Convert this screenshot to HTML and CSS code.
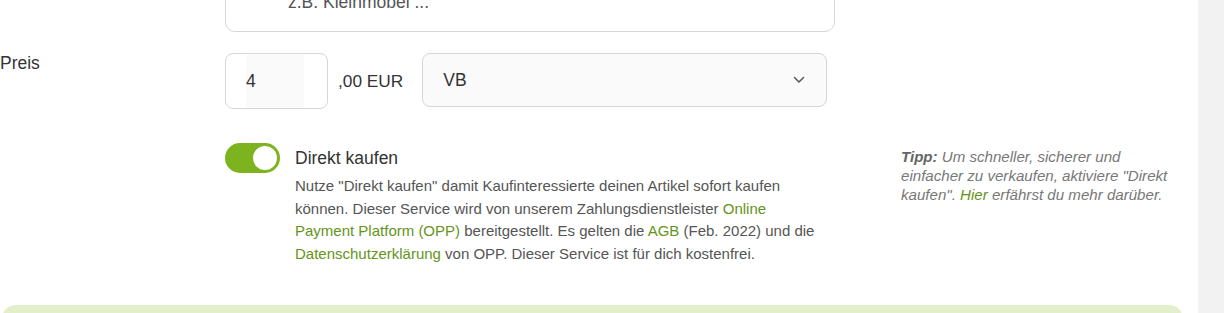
FILE: index.html
```html
<!DOCTYPE html>
<html lang="de">
<head>
    <meta charset="UTF-8">
    <meta name="viewport" content="width=device-width, initial-scale=1.0">
    <title>Anzeige aufgeben</title>
    <link rel="stylesheet" href="styles.css">
</head>
<body>
    <div class="page">
        <main class="main">
            <div class="form">
                <div class="row row-description">
                    <div class="label"></div>
                    <div class="textarea">
                        <span class="placeholder">z.B. Kleinmöbel ...</span>
                    </div>
                </div>

                <div class="row row-price">
                    <div class="label">Preis</div>
                    <div class="price-fields">
                        <div class="price-input"><span class="price-value">4</span></div>
                        <span class="currency">,00 EUR</span>
                        <div class="select">
                            <span>VB</span>
                            <svg class="chevron" width="12" height="8" viewBox="0 0 12 8">
                                <path d="M1.5 1.5 L6 6 L10.5 1.5" fill="none" stroke="#555" stroke-width="1.5" stroke-linecap="round" stroke-linejoin="round"/>
                            </svg>
                        </div>
                    </div>
                </div>

                <div class="row row-direct">
                    <div class="label"></div>
                    <div class="direct">
                        <div class="toggle on"><span class="knob"></span></div>
                        <div class="direct-text">
                            <div class="direct-title">Direkt kaufen</div>
                            <p class="direct-desc">
                                Nutze "Direkt kaufen" damit Kaufinteressierte deinen Artikel sofort kaufen
                                können. Dieser Service wird von unserem Zahlungsdienstleister
                                <a href="#">Online Payment Platform (OPP)</a> bereitgestellt. Es gelten die
                                <a href="#">AGB</a> (Feb. 2022) und die
                                <a href="#">Datenschutzerklärung</a> von OPP. Dieser Service ist für dich kostenfrei.
                            </p>
                        </div>
                    </div>
                    <p class="tip">
                        <strong>Tipp:</strong> Um schneller, sicherer und einfacher zu verkaufen, aktiviere "Direkt kaufen". <a href="#">Hier</a> erfährst du mehr darüber.
                    </p>
                </div>

                <div class="notice"></div>
            </div>
        </main>
        <aside class="sidebar"></aside>
    </div>
</body>
</html>
```

FILE: styles.css
```css
body {
    margin: 0;
    font-family: "Liberation Sans", Arial, sans-serif;
    color: #333;
    background: #fff;
}
.page {
    display: flex;
    height: 313px;
    overflow: hidden;
}
.main {
    width: 1198px;
    flex-shrink: 0;
    overflow: hidden;
}
.sidebar {
    flex: 1;
    background-color: #f2f2f2;
}
.form {
    margin-top: -38px;
}
.row {
    display: grid;
    grid-template-columns: 225px 1fr;
}
.label {
    font-size: 17.5px;
    line-height: 20px;
}
a {
    color: #64941a;
    text-decoration: none;
}

/* description box, only its bottom is visible */
.textarea {
    width: 608px;
    height: 68px;
    border: 1px solid #d6d6d6;
    border-radius: 10px;
}
.placeholder {
    display: block;
    padding: 29px 0 0 62px;
    font-size: 17.5px;
    line-height: 20px;
    color: #555;
}

/* price */
.row-price {
    margin-top: 21px;
}
.price-fields {
    display: flex;
    align-items: center;
}
.price-input {
    width: 103px;
    height: 56px;
    box-sizing: border-box;
    border: 1px solid #d6d6d6;
    border-radius: 8px;
    display: flex;
    align-items: center;
    padding-left: 20px;
}
.price-value {
    display: flex;
    align-items: center;
    width: 58px;
    height: 52px;
    background-color: #fafafa;
    font-size: 17.5px;
}
.currency {
    margin-left: 10px;
    font-size: 17.3px;
}
.select {
    margin-left: 19px;
    width: 405px;
    height: 54px;
    box-sizing: border-box;
    border: 1px solid #d6d6d6;
    border-radius: 8px;
    background-color: #fafafa;
    display: flex;
    align-items: center;
    justify-content: space-between;
    padding: 0 21px 0 20px;
    font-size: 17.5px;
    align-self: flex-start;
}

/* direkt kaufen */
.row-direct {
    grid-template-columns: 225px 676px 1fr;
    margin-top: 34px;
}
.direct {
    display: flex;
    gap: 15px;
}
.toggle {
    width: 55px;
    height: 30px;
    border-radius: 15px;
    background-color: #7db31e;
    flex-shrink: 0;
    position: relative;
}
.toggle .knob {
    position: absolute;
    top: 3px;
    right: 3px;
    width: 24px;
    height: 24px;
    border-radius: 50%;
    background: white;
}
.direct-title {
    font-size: 17.5px;
    line-height: 30px;
    color: #333;
}
.direct-desc {
    width: 525px;
    margin: 2px 0 0;
    font-size: 15px;
    line-height: 22.5px;
    color: #555;
}
.tip {
    width: 268px;
    margin: 4px 0 0;
    font-size: 15.1px;
    line-height: 19px;
    font-style: italic;
    color: #777;
}
.tip strong {
    color: #666;
}

.notice {
    margin: 40px 0 0 2px;
    width: 1181px;
    height: 60px;
    border-radius: 14px;
    background-color: #e3efca;
}
```
